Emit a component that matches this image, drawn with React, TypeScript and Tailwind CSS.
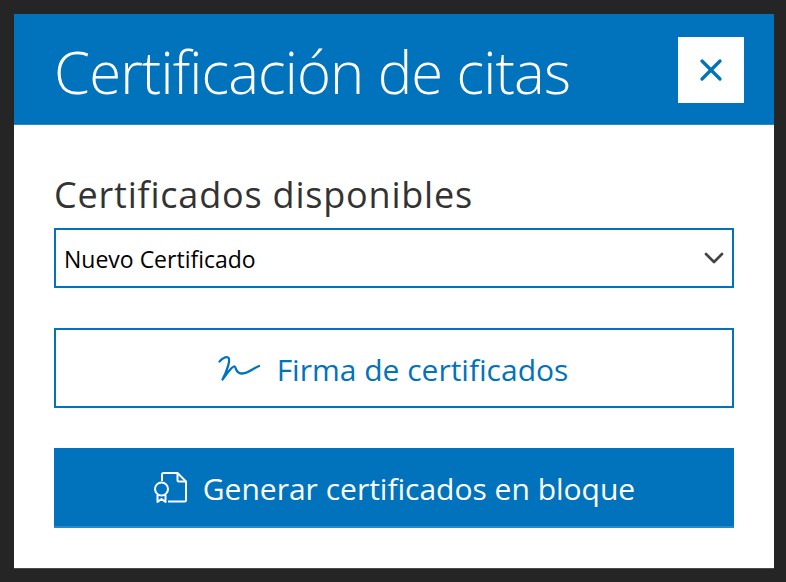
import { X, ChevronDown } from 'lucide-react'

const font = "font-['Open_Sans','Noto_Sans',sans-serif]"

function SignatureIcon() {
  return (
    <svg width="42" height="25" viewBox="0 0 42 25" fill="none" stroke="currentColor" strokeWidth="2.3" strokeLinecap="round" strokeLinejoin="round">
      <path d="M1.5 5.5 C4 3 8 .5 10 1.5 C13.5 3 8 17 4.5 23.5 C8 19 14 10 16.5 10.5 C18.5 11 17 17.5 24.5 17.5 C30 17.5 36 12 41 10" />
    </svg>
  )
}

function CertificateIcon() {
  return (
    <svg width="34" height="32" viewBox="0 0 34 32" fill="none" stroke="currentColor" strokeWidth="2" strokeLinejoin="round">
      <path d="M9 10 V3.5 Q9 2 10.5 2 H24.5 L33 10.5 V29 Q33 30.5 31.5 30.5 H15" />
      <path d="M24.5 2 V9 Q24.5 10.5 26 10.5 H33" />
      <circle cx="8.5" cy="18" r="6.5" />
      <path d="M4.5 24 V31 L8.5 28 L12.5 31 V24" />
    </svg>
  )
}

export default function App() {
  return (
    <div className={`w-[786px] h-[582px] bg-[#252525] pl-[14px] pr-[12px] pt-[14px] ${font}`}>
      <div className="w-[760px] h-[555px] bg-white flex flex-col border-b border-[#4a4a4a]">
        {/* Header */}
        <div className="h-[111px] bg-[#0173bc] border-b border-[#2a8ac8] pl-[40px] pr-[30px] flex items-center justify-between">
          <h1 className="text-[58px] font-light text-white leading-none tracking-[-0.86px] pt-[6px]">Certificación de citas</h1>
          <button className="w-[66px] h-[66px] mt-[1px] bg-white flex items-center justify-center text-[#0173bc]">
            <X size={36} strokeWidth={2.2} />
          </button>
        </div>

        {/* Body */}
        <div className="flex flex-col px-[40px] pt-[46px]">
          <label className="text-[36px] leading-[48px] tracking-[0.8px] text-[#333333] mb-[9px]">Certificados disponibles</label>
          <div className="h-[60px] border-2 border-[#0173bc] flex items-center justify-between pl-[8px] pr-[2px] text-[23px] text-black">
            <span className="pt-[2px]">Nuevo Certificado</span>
            <ChevronDown size={32} strokeWidth={2} className="text-[#444444]" />
          </div>
          <button className="mt-[40px] h-[80px] border-2 border-[#0173bc] pr-[2px] flex items-center justify-center gap-[17px] text-[#0173bc] text-[30px]">
            <SignatureIcon />
            <span className="pt-[2px]">Firma de certificados</span>
          </button>
          <button className="mt-[40px] h-[80px] bg-[#0173bc] border-b-2 border-[#2a8ac8] flex items-center justify-center gap-[16px] text-white text-[30px]">
            <CertificateIcon />
            <span className="pt-[2px]">Generar certificados en bloque</span>
          </button>
        </div>
      </div>
    </div>
  )
}
